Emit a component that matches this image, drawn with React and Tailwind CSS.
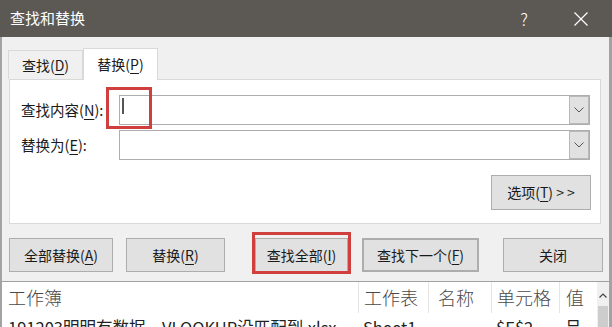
import React from 'react';

const Mn = ({ children }) => (
  <span className="underline decoration-[1px] underline-offset-[3px]">{children}</span>
);

const Chevron = () => (
  <svg width="10" height="6" viewBox="0 0 10 6">
    <path d="M0.5 0.5 L5 5 L9.5 0.5" fill="none" stroke="#555" strokeWidth="1" />
  </svg>
);

// 下拉组合框
const Combo = () => (
  <div className="flex h-[30px] w-[471px] border border-[#adadad] bg-white">
    <div className="flex-1" />
    <div className="flex w-[20px] items-center justify-center border border-[#b9b9b9] bg-[#e1e1e1]">
      <Chevron />
    </div>
  </div>
);

const Btn = ({ className = '', children }) => (
  <div
    className={`flex h-[34px] items-center justify-center border border-[#adadad] bg-[#e1e1e1] text-[14px] text-[#1a1a1a] ${className}`}
  >
    {children}
  </div>
);

export default function App() {
  return (
    <div className="relative h-[327px] w-[612px] overflow-hidden bg-[#f0f0f0] font-['Microsoft_YaHei','Noto_Sans_CJK_SC',sans-serif] text-[#1a1a1a]">
      {/* Title bar */}
      <div className="flex h-[37px] items-center bg-[#5c5955] pl-[10px] text-white">
        <span className="text-[15px]">查找和替换</span>
        <span className="ml-auto mr-[46px] text-[17px] font-light">?</span>
        <svg className="mr-[24px]" width="14" height="14" viewBox="0 0 14 14">
          <path d="M0.5 0.5 L13.5 13.5 M13.5 0.5 L0.5 13.5" stroke="#fff" strokeWidth="1.2" />
        </svg>
      </div>

      <div className="h-[290px] border-l-2 border-r-[3px] border-[#a3a3a3]">
        {/* Tabs */}
        <div className="flex items-end pl-[6px] pt-[11px]">
          <div className="flex h-[29px] w-[75px] items-center justify-center border border-b-0 border-[#d9d9d9] bg-[#f0f0f0] text-[14px]">
            查找(<Mn>D</Mn>)
          </div>
          <div className="relative z-10 -mb-px flex h-[32px] w-[75px] items-center justify-center border border-b-0 border-[#d9d9d9] bg-white text-[14px]">
            替换(<Mn>P</Mn>)
          </div>
        </div>

        {/* Panel */}
        <div className="ml-[7px] h-[145px] w-[592px] border border-[#d9d9d9] bg-white pl-[11px] pr-[9px] pt-[15px]">
          <div className="flex items-center">
            <div className="w-[98px] text-[14.5px]">
              查找内容(<Mn>N</Mn>):
            </div>
            <Combo />
          </div>
          <div className="mt-[5px] flex items-center">
            <div className="w-[98px] text-[14.5px]">
              替换为(<Mn>E</Mn>):
            </div>
            <Combo />
          </div>
          <div className="mt-[15px] flex justify-end">
            <Btn className="h-[35px] w-[100px]">
              选项(<Mn>T</Mn>)&nbsp;&gt; &gt;
            </Btn>
          </div>
        </div>

        {/* Buttons */}
        <div className="mt-[14px] flex pl-[7px]">
          <Btn className="w-[104px]">
            全部替换(<Mn>A</Mn>)
          </Btn>
          <Btn className="ml-[13px] w-[99px]">
            替换(<Mn>R</Mn>)
          </Btn>
          <Btn className="ml-[30px] w-[93px]">
            查找全部(<Mn>I</Mn>)
          </Btn>
          <Btn className="ml-[14px] w-[117px] border-2 border-[#2f74b8]">
            查找下一个(<Mn>F</Mn>)
          </Btn>
          <Btn className="ml-[24px] w-[100px]">关闭</Btn>
        </div>

        {/* Results list */}
        <div className="mt-[9px] flex h-[50px] border-t border-[#a0a0a0] bg-white">
          <div className="flex-1 overflow-hidden">
            <div className="flex h-[31px] items-center text-[18px] font-light text-[#4a4a4a]">
              <div className="w-[356px] pl-[6px]">工作簿</div>
              <div className="h-full w-[70px] border-l border-[#e5e5e5] pl-[5px] leading-[31px]">工作表</div>
              <div className="h-full w-[63px] border-l border-[#e5e5e5] pl-[9px] leading-[31px]">名称</div>
              <div className="h-full w-[68px] border-l border-[#e5e5e5] pl-[5px] leading-[31px]">单元格</div>
              <div className="h-full flex-1 border-l border-[#e5e5e5] pl-[6px] leading-[31px]">值</div>
            </div>
            <div className="flex whitespace-nowrap pt-[2px] text-[16.5px] leading-[24px] text-[#222]">
              <div className="w-[356px] pl-[6px]">191203明明有数据，VLOOKUP没匹配到.xlsx</div>
              <div className="w-[70px] pl-[5px]">Sheet1</div>
              <div className="w-[63px]" />
              <div className="w-[68px] pl-[5px]">$E$2</div>
              <div className="flex-1 overflow-hidden pl-[6px]">吕</div>
            </div>
          </div>
          {/* Scrollbar */}
          <div className="flex w-[12px] flex-col items-center bg-[#f0f0f0]">
            <svg className="mt-[11px]" width="8" height="5" viewBox="0 0 8 5">
              <path d="M0.5 4.5 L4 1 L7.5 4.5" fill="none" stroke="#444" strokeWidth="1.2" />
            </svg>
            <div className="mt-[8px] w-[10px] flex-1 bg-[#cdcdcd]" />
          </div>
        </div>
      </div>

      {/* Red annotation boxes */}
      <div className="absolute left-[106px] top-[87px] h-[42px] w-[46px] border-[3px] border-[#cf3f3d]" />
      <div className="absolute left-[122px] top-[98px] h-[16px] w-[2px] bg-[#555]" />
      <div className="absolute left-[252px] top-[232px] h-[42px] w-[99px] border-[3px] border-[#cf3f3d]" />
    </div>
  );
}
